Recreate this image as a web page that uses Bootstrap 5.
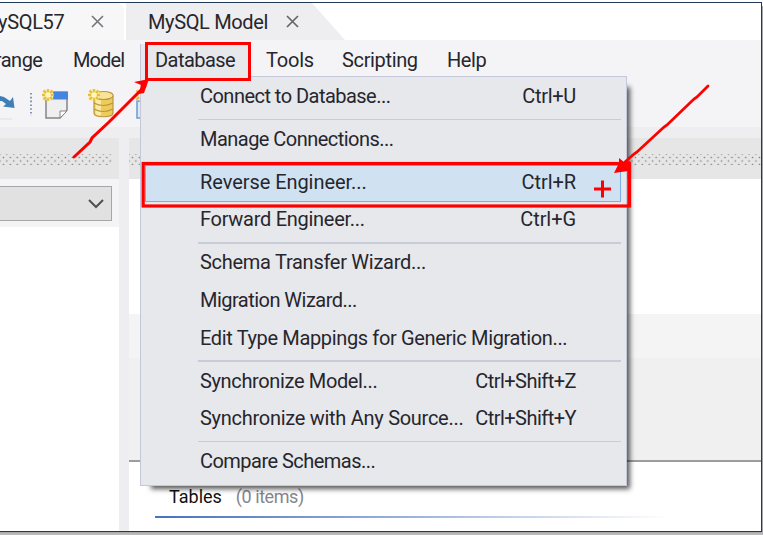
<!DOCTYPE html>
<html lang="en">
<head>
<meta charset="utf-8">
<meta name="viewport" content="width=device-width, initial-scale=1">
<title>MySQL Model</title>
<link href="https://cdn.jsdelivr.net/npm/bootstrap@5.3.0/dist/css/bootstrap.min.css" rel="stylesheet">
<style>
body{width:763px;height:535px;overflow:hidden;background:#fff;font:20px/24px Roboto,"Liberation Sans",sans-serif;color:#26262c;white-space:nowrap}
.desk{width:763px;height:535px;background:linear-gradient(#a8a8a8,#c2c2c2) 0 532px/763px 3px no-repeat,linear-gradient(90deg,#8f98a3,#b5b5b5) 762px 6px/1px 529px no-repeat;padding-top:2px}
.win{width:762px;height:530px;border:1px solid #203a58;border-left:0;background:#fff}
.tabs{height:37px}
.tab-old{width:124px;background:#f7f7f8;border-radius:0 8px 0 0}
.tab-old span{margin-left:-19px;letter-spacing:-.35px}
.tab-old svg{margin:0 20px 0 auto}
.tab-now{width:219px;margin-left:2px;background:#eeeef1;clip-path:polygon(0 0,186px 0,100% 100%,0 100%)}
.tab-now span{margin-left:22px;width:120px;letter-spacing:-.36px}
.tab-now svg{margin-left:18px}
.shell{height:491px;background:#f4f4f7}
.menus{height:37px;padding-top:2px}
.m-arr{margin-left:-24px;width:97px;letter-spacing:-.5px}
.m-mod{width:193px;letter-spacing:-.9px}
.m-too{width:76px;letter-spacing:-.2px}
.m-scr{width:105px;letter-spacing:-.35px}
.m-hlp{letter-spacing:-.4px}
.tools{height:50px}
.strip{height:11px;background:#eeeef0}
.body-row{height:393px}
.side{width:119px;background:#fff}
.split{width:10px;background:#eeeef1}
.grip{height:41px;background:#e6e6e6;padding-top:16px}
.dots{height:11px;background:radial-gradient(circle,#858585 .7px,transparent 1.1px) 0 0/6.9px 7px,radial-gradient(circle,#858585 .7px,transparent 1.1px) 3.4px 3.5px/6.9px 7px}
.side .dots{width:112px}
.combo-area{height:48px;background:#f4f4f6;padding-top:7px}
.combo{width:112px;height:35px;background:#e1e1e1;border:1px solid #a6a6a6;border-left:0;padding-right:7px}
.pane-a{height:135px;background:#fff}
.pane-b{height:44px;background:#f4f4f4}
.pane-c{height:104px;background:#f0f0f0;border-bottom:2px solid #9c9c9c}
.tables{padding:23px 0 0 40px;font-size:18px;color:#111}
.count{margin-left:14px;color:#85858d;letter-spacing:-.45px}
.rule{height:2px;width:515px;margin:7px 0 0 -14px;background:linear-gradient(90deg,#4672bd,#9db3dc 50%,#fff)}
.menu-box{left:140px;top:76px;width:487px;height:410px;background:#e6e8ec;border:1px solid #c5c8da;padding:2px 5px 0 4px;box-shadow:7px 7px 5px -4px rgba(0,0,0,.65)}
.entry{height:37.7px;padding:0 44px 0 54px;border:1px solid transparent;line-height:32.5px}
.entry.hot{background:#d0e2f2;border-color:#7aaee6}
.sepr{height:5.2px;margin-left:53px;padding-top:2px}
.sepr::before{content:"";display:block;height:1.5px;background:#c8ccda}
.x0{letter-spacing:-.06px}
.x1{letter-spacing:-.28px}
.x2{letter-spacing:-.36px}
.x3{letter-spacing:-.53px}
.open-tab{left:140px;top:44px;width:111px;height:33px;background:#e6e8ec;border-left:1px solid #c5c8da;padding:4px 0 0 14px;letter-spacing:-.55px}
.over{left:0;top:0;pointer-events:none}
</style>
<script src="https://cdn.jsdelivr.net/npm/bootstrap@5.3.0/dist/js/bootstrap.bundle.min.js"></script>
</head>
<body>
<div class="desk position-relative">
 <div class="win overflow-hidden">
  <div class="tabs d-flex">
   <div class="tab-old d-flex align-items-center"><span>MySQL57</span><svg width="13" height="13"><path d="M1 1L12 12M12 1L1 12" stroke="#74747a" stroke-width="1.6"/></svg></div>
   <div class="tab-now d-flex align-items-center"><span>MySQL Model</span><svg width="13" height="13"><path d="M1 1L12 12M12 1L1 12" stroke="#65656b" stroke-width="1.7"/></svg></div>
  </div>
  <div class="shell">
   <div class="menus d-flex align-items-center">
    <span class="m-arr">Arrange</span><span class="m-mod">Model</span><span class="m-too">Tools</span><span class="m-scr">Scripting</span><span class="m-hlp">Help</span>
   </div>
   <div class="tools"><svg width="160" height="50">
    <path d="M0 19L4 20L10 24L13 20L14.500 31L3 29.500L6 27L2 24L0 24Z" fill="#3f7fb8"/>
    <path d="M0 42H12" stroke="#dedee2"/>
    <path d="M31 16V39" stroke="#6580a5" stroke-width="1.6" stroke-dasharray="1.6 2.2"/>
    <path d="M46 15H67V33L60 41H46Z" fill="#efeff0" stroke="#858585" stroke-width="1.5"/>
    <path d="M53 15H68V22.500H53Z" fill="#4585e0"/><path d="M60 41V34H67Z" fill="#fff" stroke="#858585"/>
    <path d="M94 19V36C94 41 113 41 113 36V19Z" fill="#edcc5b" stroke="#bd963f" stroke-width="1.2"/>
    <path d="M95.500 20V37Q97 38.500 101 38.500V20Z" fill="#fbeaa0"/>
    <ellipse cx="103.500" cy="18.500" rx="9.700" ry="4" fill="#f8e398" stroke="#bd963f" stroke-width="1.2"/>
    <path d="M94 26Q103 31 113 26M94 32Q103 37 113 32" fill="none" stroke="#bd963f" stroke-width="1.2"/>
    <g id="star"><path d="M48 12V24M42 18H54M43.500 13.500L52.500 22.500M52.500 13.500L43.500 22.500" stroke="#f5dd7c" stroke-width="3.200"/><path d="M48 12V24M42 18H54M43.500 13.500L52.500 22.500M52.500 13.500L43.500 22.500" stroke="#dfb330" stroke-width="1.300"/><circle cx="48" cy="18" r="2.800" fill="#fff9bd"/></g>
    <path d="M142 24H137V41H142" fill="#d9e9fa" stroke="#6c9bd1" stroke-width="1.500"/>
    <use href="#star" x="46"/><use href="#star" x="93"/>
   </svg></div>
   <div class="strip"></div>
   <div class="body-row d-flex">
    <div class="side">
     <div class="grip"><div class="dots"></div></div>
     <div class="combo-area"><div class="combo d-flex align-items-center justify-content-end"><svg width="16" height="10"><path d="M1 1L8 8L15 1" fill="none" stroke="#505050" stroke-width="2"/></svg></div></div>
    </div>
    <div class="split"></div>
    <div class="flex-fill bg-white">
     <div class="grip"><div class="dots"></div></div>
     <div class="pane-a"></div><div class="pane-b"></div><div class="pane-c"></div>
     <div class="tables"><span>Tables</span><span class="count">(0 items)</span><div class="rule"></div></div>
    </div>
   </div>
  </div>
 </div>
 <div class="menu-box position-absolute">
  <div class="entry d-flex justify-content-between"><span class="x3">Connect to Database...</span><span class="x1">Ctrl+U</span></div>
  <div class="sepr"></div>
  <div class="entry d-flex justify-content-between"><span class="x3">Manage Connections...</span></div>
  <div class="sepr"></div>
  <div class="entry hot d-flex justify-content-between"><span class="x0">Reverse Engineer...</span><span class="x0">Ctrl+R</span></div>
  <div class="entry d-flex justify-content-between"><span class="x1">Forward Engineer...</span><span class="x0">Ctrl+G</span></div>
  <div class="sepr"></div>
  <div class="entry d-flex justify-content-between"><span class="x1">Schema Transfer Wizard...</span></div>
  <div class="entry d-flex justify-content-between"><span class="x3">Migration Wizard...</span></div>
  <div class="entry d-flex justify-content-between"><span class="x2">Edit Type Mappings for Generic Migration...</span></div>
  <div class="sepr"></div>
  <div class="entry d-flex justify-content-between"><span class="x2">Synchronize Model...</span><span class="x3">Ctrl+Shift+Z</span></div>
  <div class="entry d-flex justify-content-between"><span class="x1">Synchronize with Any Source...</span><span class="x3">Ctrl+Shift+Y</span></div>
  <div class="sepr"></div>
  <div class="entry d-flex justify-content-between"><span class="x3">Compare Schemas...</span></div>
 </div>
 <div class="open-tab position-absolute">Database</div>
 <svg class="over position-absolute" width="763" height="535" fill="none" stroke="#f00">
  <rect x="146.500" y="43.500" width="103" height="36" stroke-width="3"/>
  <rect x="143.200" y="163.500" width="486.300" height="42.500" stroke-width="3.200"/>
  <path d="M74 157L90 142L92 138L109 122L145 86" stroke-width="3" stroke-linecap="round"/>
  <path d="M149 79L134 82L141 85L139 94L144 93Z" fill="#f00" stroke="none"/>
  <path d="M708 86L697 97L694 99L667 125L664 127L637 152L634 154L625 162" stroke-width="2.800" stroke-linecap="round"/>
  <path d="M630 161L624 162L619 158V163L614 173L628 171Z" fill="#f00" stroke="none"/>
  <path d="M594 189H611M602.500 180.500V197.500" stroke-width="3"/>
 </svg>
</div>
</body>
</html>
